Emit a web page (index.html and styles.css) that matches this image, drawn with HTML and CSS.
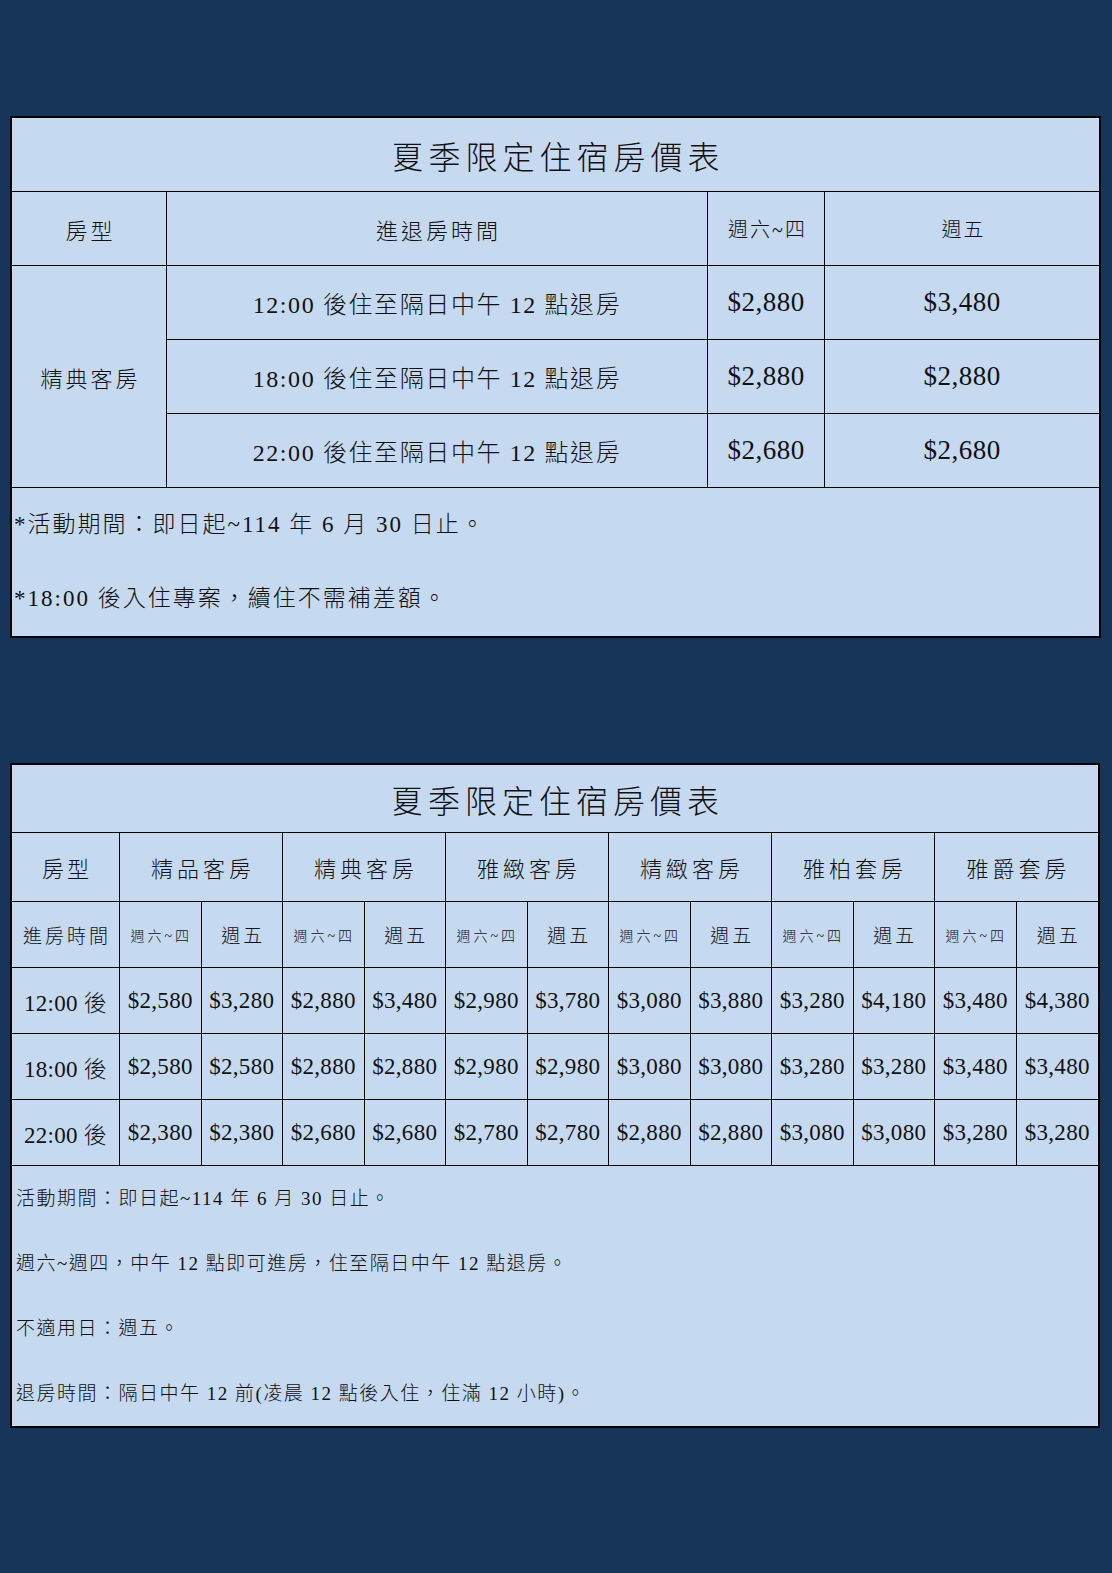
FILE: index.html
```html
<!DOCTYPE html>
<html lang="zh-Hant">
<head>
<meta charset="utf-8">
<title>夏季限定住宿房價表</title>
<link rel="stylesheet" href="styles.css">
</head>
<body>
<main class="page">
  <table class="grid t1">
    <colgroup>
      <col class="c1-type"><col class="c1-time"><col class="c1-wk"><col class="c1-fri">
    </colgroup>
    <tr class="r74"><td colspan="4" class="title end">夏季限定住宿房價表</td></tr>
    <tr class="r74">
      <td class="hd">房型</td>
      <td class="hd">進退房時間</td>
      <td class="hd sm">週六~四</td>
      <td class="hd sm end">週五</td>
    </tr>
    <tr class="r74">
      <td rowspan="3" class="hd">精典客房</td>
      <td class="desc">12:00 後住至隔日中午 12 點退房</td>
      <td class="price">$2,880</td>
      <td class="price end">$3,480</td>
    </tr>
    <tr class="r74">
      <td class="desc">18:00 後住至隔日中午 12 點退房</td>
      <td class="price">$2,880</td>
      <td class="price end">$2,880</td>
    </tr>
    <tr class="r74">
      <td class="desc">22:00 後住至隔日中午 12 點退房</td>
      <td class="price">$2,680</td>
      <td class="price end">$2,680</td>
    </tr>
    <tr>
      <td colspan="4" class="notes notes1 end">
        <p>*活動期間：即日起~114 年 6 月 30 日止。</p>
        <p>*18:00 後入住專案，續住不需補差額。</p>
      </td>
    </tr>
  </table>

  <table class="grid t2">
    <colgroup>
      <col class="c2-first">
      <col><col><col><col><col><col><col><col><col><col><col><col>
    </colgroup>
    <tr class="r68"><td colspan="13" class="title end">夏季限定住宿房價表</td></tr>
    <tr class="r69">
      <td class="h2">房型</td>
      <td colspan="2" class="h2 wide">精品客房</td>
      <td colspan="2" class="h2 wide">精典客房</td>
      <td colspan="2" class="h2 wide">雅緻客房</td>
      <td colspan="2" class="h2 wide">精緻客房</td>
      <td colspan="2" class="h2 wide">雅柏套房</td>
      <td colspan="2" class="h2 wide end">雅爵套房</td>
    </tr>
    <tr class="r66">
      <td class="h3">進房時間</td>
      <td class="tiny">週六~四</td><td class="h3">週五</td>
      <td class="tiny">週六~四</td><td class="h3">週五</td>
      <td class="tiny">週六~四</td><td class="h3">週五</td>
      <td class="tiny">週六~四</td><td class="h3">週五</td>
      <td class="tiny">週六~四</td><td class="h3">週五</td>
      <td class="tiny">週六~四</td><td class="h3 end">週五</td>
    </tr>
    <tr class="r66">
      <td class="p2">12:00 後</td>
      <td class="p2">$2,580</td><td class="p2">$3,280</td>
      <td class="p2">$2,880</td><td class="p2">$3,480</td>
      <td class="p2">$2,980</td><td class="p2">$3,780</td>
      <td class="p2">$3,080</td><td class="p2">$3,880</td>
      <td class="p2">$3,280</td><td class="p2">$4,180</td>
      <td class="p2">$3,480</td><td class="p2 end">$4,380</td>
    </tr>
    <tr class="r66">
      <td class="p2">18:00 後</td>
      <td class="p2">$2,580</td><td class="p2">$2,580</td>
      <td class="p2">$2,880</td><td class="p2">$2,880</td>
      <td class="p2">$2,980</td><td class="p2">$2,980</td>
      <td class="p2">$3,080</td><td class="p2">$3,080</td>
      <td class="p2">$3,280</td><td class="p2">$3,280</td>
      <td class="p2">$3,480</td><td class="p2 end">$3,480</td>
    </tr>
    <tr class="r66">
      <td class="p2">22:00 後</td>
      <td class="p2">$2,380</td><td class="p2">$2,380</td>
      <td class="p2">$2,680</td><td class="p2">$2,680</td>
      <td class="p2">$2,780</td><td class="p2">$2,780</td>
      <td class="p2">$2,880</td><td class="p2">$2,880</td>
      <td class="p2">$3,080</td><td class="p2">$3,080</td>
      <td class="p2">$3,280</td><td class="p2 end">$3,280</td>
    </tr>
    <tr>
      <td colspan="13" class="notes notes2 end">
        <p>活動期間：即日起~114 年 6 月 30 日止。</p>
        <p>週六~週四，中午 12 點即可進房，住至隔日中午 12 點退房。</p>
        <p>不適用日：週五。</p>
        <p>退房時間：隔日中午 12 前(凌晨 12 點後入住，住滿 12 小時)。</p>
      </td>
    </tr>
  </table>
</main>
</body>
</html>
```

FILE: styles.css
```css
html, body {
  margin: 0;
  padding: 0;
}

body {
  background: #17355b;
  min-height: 1573px;
  font-family: "Liberation Serif", "Noto Sans CJK TC", serif;
  font-weight: 300;
  color: #111;
}

.page {
  display: flex;
  flex-direction: column;
  align-items: flex-start;
  gap: 125px;
  padding: 116px 0 0 10px;
}

.grid {
  border: 2px solid #000;
  border-spacing: 0;
  border-collapse: separate;
  table-layout: fixed;
  background: #c5d9f1;
}

.grid td {
  border-right: 1px solid #000;
  border-bottom: 1px solid #000;
  padding: 0;
  text-align: center;
  vertical-align: middle;
  white-space: nowrap;
  overflow: hidden;
}

.grid td.end {
  border-right: 0;
}

.grid td.notes {
  border-bottom: 0;
  text-align: left;
}

/* table 1 */
.t1 { width: 1091px; }
.c1-type { width: 155px; }
.c1-time { width: 541px; }
.c1-wk { width: 117px; }
.c1-fri { width: 274px; }

.r74 { height: 74px; }
.r68 { height: 68px; }
.r69 { height: 69px; }
.r66 { height: 66px; }

.title {
  font-size: 32px;
  letter-spacing: 5px;
  text-indent: 5px;
}

.hd {
  font-size: 22px;
  letter-spacing: 3px;
  text-indent: 3px;
}

.hd.sm {
  font-size: 20px;
  letter-spacing: 2px;
}

.desc {
  font-size: 24px;
  letter-spacing: 1.6px;
}

.price {
  font-size: 27px;
  letter-spacing: 0.5px;
}

.notes p {
  margin: 0;
  padding-left: 2px;
}

.notes1 p {
  line-height: 74px;
  font-size: 23px;
  letter-spacing: 2px;
}

/* table 2 */
.t2 { width: 1090px; }
.c2-first { width: 108px; }

.h2 {
  font-size: 22px;
  letter-spacing: 3px;
  text-indent: 3px;
}

.h2.wide {
  letter-spacing: 4px;
  text-indent: 4px;
}

.h3 {
  font-size: 19px;
  letter-spacing: 3px;
  text-indent: 3px;
}

.tiny {
  font-size: 14px;
  letter-spacing: 3px;
  text-indent: 2px;
}

.p2 {
  font-size: 23px;
  letter-spacing: 0.3px;
}

.notes2 p {
  line-height: 65px;
  font-size: 19px;
  letter-spacing: 1.5px;
  padding-left: 4px;
}
```
